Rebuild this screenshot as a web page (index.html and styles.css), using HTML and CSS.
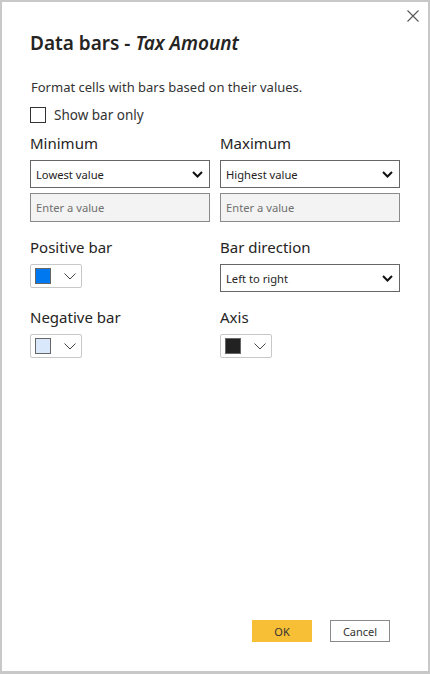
FILE: index.html
```html
<!DOCTYPE html>
<html lang="en">
<head>
<meta charset="utf-8">
<title>Data bars</title>
<link rel="stylesheet" href="styles.css">
</head>
<body>
<div class="dialog">
  <button class="close" aria-label="Close">
    <svg width="12" height="12" viewBox="0 0 12 12"><path d="M0.5 0.5 L11.5 11.5 M11.5 0.5 L0.5 11.5" stroke="#555" stroke-width="1.1" fill="none"/></svg>
  </button>
  <h1 class="title">Data bars - <em>Tax Amount</em></h1>
  <p class="desc">Format cells with bars based on their values.</p>
  <label class="check"><span class="box"></span><span>Show bar only</span></label>

  <div class="grid">
    <div class="field">
      <div class="label">Minimum</div>
      <div class="select"><span>Lowest value</span><svg class="chev" width="11" height="7" viewBox="0 0 11 7"><path d="M1 1 L5.5 5.5 L10 1" stroke="#111" stroke-width="2" fill="none"/></svg></div>
      <div class="input">Enter a value</div>
    </div>
    <div class="field">
      <div class="label">Maximum</div>
      <div class="select"><span>Highest value</span><svg class="chev" width="11" height="7" viewBox="0 0 11 7"><path d="M1 1 L5.5 5.5 L10 1" stroke="#111" stroke-width="2" fill="none"/></svg></div>
      <div class="input">Enter a value</div>
    </div>
    <div class="field">
      <div class="label">Positive bar</div>
      <div class="picker"><span class="swatch blue"></span><svg width="12" height="7" viewBox="0 0 12 7"><path d="M0.5 0.5 L6 6 L11.5 0.5" stroke="#444" stroke-width="1" fill="none"/></svg></div>
    </div>
    <div class="field">
      <div class="label">Bar direction</div>
      <div class="select"><span>Left to right</span><svg class="chev" width="11" height="7" viewBox="0 0 11 7"><path d="M1 1 L5.5 5.5 L10 1" stroke="#111" stroke-width="2" fill="none"/></svg></div>
    </div>
    <div class="field">
      <div class="label">Negative bar</div>
      <div class="picker"><span class="swatch light"></span><svg width="12" height="7" viewBox="0 0 12 7"><path d="M0.5 0.5 L6 6 L11.5 0.5" stroke="#444" stroke-width="1" fill="none"/></svg></div>
    </div>
    <div class="field">
      <div class="label">Axis</div>
      <div class="picker"><span class="swatch dark"></span><svg width="12" height="7" viewBox="0 0 12 7"><path d="M0.5 0.5 L6 6 L11.5 0.5" stroke="#444" stroke-width="1" fill="none"/></svg></div>
    </div>
  </div>

  <div class="footer">
    <button class="btn ok">OK</button>
    <button class="btn cancel">Cancel</button>
  </div>
</div>
</body>
</html>
```
FILE: styles.css
```css
* { box-sizing: border-box; }
html, body { margin: 0; padding: 0; background: #fff; }
body { font-family: "Noto Sans", "Open Sans", sans-serif; color: #252423; }
.dialog {
  position: relative;
  width: 430px;
  height: 674px;
  border: 2px solid #c8c8c8;
  border-bottom-width: 3px;
  padding: 0 28px 0 28px;
  display: flex;
  flex-direction: column;
}
.close {
  position: absolute;
  top: 8px;
  right: 9px;
  border: 0;
  background: none;
  padding: 0;
  width: 12px;
  height: 12px;
  display: flex;
}
.title {
  margin: 28px 0 0 0;
  font-size: 19px;
  font-weight: 600;
  line-height: 26px;
  color: #252423;
}
.title em { font-style: italic; }
.desc {
  margin: 22px 0 0 1px;
  font-size: 13px;
  line-height: 18px;
  color: #333;
}
.check {
  margin-top: 10px;
  display: flex;
  align-items: center;
  gap: 8px;
  font-size: 13.5px;
  color: #333;
  height: 18px;
}
.box {
  width: 16px;
  height: 16px;
  border: 1px solid #333;
  background: #fff;
}
.grid {
  margin-top: 9px;
  display: grid;
  grid-template-columns: 180px 180px;
  column-gap: 10px;
  row-gap: 15px;
}
.field { display: flex; flex-direction: column; }
.label {
  font-size: 15px;
  line-height: 20px;
  color: #252423;
  margin-bottom: 7px;
}
.select {
  height: 28px;
  border: 1px solid #666;
  display: flex;
  align-items: center;
  justify-content: space-between;
  padding: 0 6px 0 5px;
  font-size: 11.2px;
  color: #252423;
  background: #fff;
}
.input {
  margin-top: 5px;
  height: 29px;
  border: 1px solid #8a8a8a;
  background: #f3f3f3;
  display: flex;
  align-items: center;
  padding: 0 5px;
  font-size: 11.2px;
  color: #707070;
}
.picker {
  width: 52px;
  height: 24px;
  border: 1px solid #c8c8c8;
  border-radius: 2px;
  display: flex;
  align-items: center;
  gap: 13px;
  padding-left: 4px;
}
.swatch { width: 16px; height: 16px; border: 1px solid #666; }
.swatch.blue { background: #0078f0; }
.swatch.light { background: #d9e8fb; }
.swatch.dark { background: #222; }
.footer {
  margin-top: auto;
  margin-bottom: 29px;
  display: flex;
  justify-content: flex-end;
  gap: 18px;
  padding-right: 10px;
}
.btn {
  width: 60px;
  height: 22px;
  font-family: "Noto Sans", "Open Sans", sans-serif;
  font-size: 11px;
  padding: 0;
  color: #333;
}
.ok { background: #f6bf35; border: 1px solid #f6bf35; }
.cancel { background: #fff; border: 1px solid #8a8a8a; }
```
